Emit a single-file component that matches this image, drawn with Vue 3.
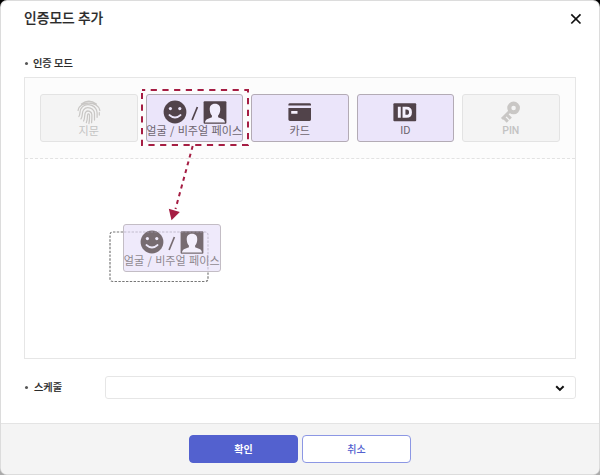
<script setup>
import { h } from 'vue'

const modes = [
  { id: 'finger', label: '지문', disabled: true },
  { id: 'face', label: '얼굴 / 비주얼 페이스' },
  { id: 'card', label: '카드' },
  { id: 'id', label: 'ID' },
  { id: 'pin', label: 'PIN', disabled: true },
]

const FaceIcons = () =>
  h('svg', { width: 66, height: 25, viewBox: '0 0 66 25' }, [
    h('circle', { cx: 12, cy: 12, r: 11.4, fill: 'currentColor' }),
    h('circle', { cx: 7.4, cy: 8.6, r: 1.6, fill: '#ebe5fa' }),
    h('circle', { cx: 16.8, cy: 8.6, r: 1.6, fill: '#ebe5fa' }),
    h('path', { d: 'M6.4 15Q12 20 17.6 15', fill: 'none', stroke: '#ebe5fa', 'stroke-width': 1.7, 'stroke-linecap': 'round' }),
    h('path', { d: 'M29.1 20L34.4 7', fill: 'none', stroke: 'currentColor', 'stroke-width': 1.7 }),
    h('rect', { x: 40.6, y: 1.2, width: 22.8, height: 22.6, rx: 1, fill: 'currentColor' }),
    h('path', { d: 'M41.9 22.4c.3-2 1.6-3 3.2-3.7l3.8-1.5v-1.8c-1.3-1.3-1.9-3-2.1-5.2-.5-4.2 1.5-6.5 5.2-6.5s5.7 2.3 5.2 6.5c-.2 2.2-.9 3.9-2.1 5.2v1.8l3.8 1.5c1.7.7 2.9 1.7 3.1 3.7z', fill: '#f1edfc' }),
  ])
</script>

<template>
  <div class="backdrop">
    <section class="dialog">
      <header class="head">
        <h1>인증모드 추가</h1>
        <svg class="close" width="12" height="12" viewBox="0 0 12 12"><path d="M1.3 1.3l9.2 9.2M10.5 1.3l-9.2 9.2" /></svg>
      </header>
      <div class="content">
        <div class="label"><i></i><span>인증 모드</span></div>
        <div class="board">
          <div class="palette">
            <div v-for="m in modes" :key="m.id" class="mode" :class="[m.id, { disabled: m.disabled }]">
              <div class="icon">
                <FaceIcons v-if="m.id === 'face'" />
                <svg v-else-if="m.id === 'finger'" class="print" width="24" height="25" viewBox="0 0 24 25">
                  <path d="M4.4 4Q11.8-1.5 19.4 4M1.1 10.5C2.2.8 21.4.8 22.8 10.5M1.9 16.5c2.2-3.2-.3-6.5 3.4-9.6C11 1.9 19.7 6 20.1 12.8v4.5M4 18.9c2.2-3 .4-6.5 2.6-9.1 3.5-4.2 10.8-1.4 10.9 4v6.3M6.6 21c1.8-4 .5-6.8 2.1-8.9 2.2-2.4 6.1-.4 6.2 2.7 0 3 0 5.2-.3 7.8M9.3 22.7c1.4-3.2.9-5.8 1.3-7.8.4-1.5 1.9-1.2 1.9.5.1 3 0 5.3-.6 8.1M22.3 12.5v2.5" />
                </svg>
                <svg v-else-if="m.id === 'card'" width="24" height="25" viewBox="0 0 24 25">
                  <path fill="currentColor" d="M2 3.2h19.6q1.4 0 1.4 1.4v1H.4v-1Q.4 3.2 2 3.2zM.4 7.9H23v11.7q0 1.4-1.4 1.4H2Q.4 21 .4 19.6z" />
                  <path fill="#f5f1fd" d="M3.2 11h6.3v2.7H3.2z" />
                </svg>
                <svg v-else-if="m.id === 'id'" width="24" height="25" viewBox="0 0 24 25">
                  <rect x=".4" y="3.2" width="22.8" height="18" rx="1" fill="currentColor" />
                  <path d="M6.3 6.7v11M11 8.1v8.2h2.5c2.8 0 4-1.4 4-4.1s-1.2-4.1-4-4.1z" fill="none" stroke="#f5f1fd" stroke-width="2.9" />
                </svg>
                <svg v-else width="24" height="25" viewBox="0 0 24 25">
                  <circle cx="14.6" cy="7.9" r="4.3" fill="none" stroke="currentColor" stroke-width="4.1" />
                  <path d="M10.8 11.2L3 19M4.4 17.2l4.4 4.4M7.4 14.2l4.4 4.4" fill="none" stroke="currentColor" stroke-width="3" />
                </svg>
              </div>
              <span>{{ m.label }}</span>
            </div>
          </div>
        </div>
        <div class="schedule">
          <div class="label"><i></i><span>스케줄</span></div>
          <div class="select">
            <svg width="10" height="7" viewBox="0 0 10 7"><path d="M1.2 1.2l3.7 3.7 3.7-3.7" /></svg>
          </div>
        </div>
      </div>
      <footer>
        <button class="ok">확인</button>
        <button class="cancel">취소</button>
      </footer>
    </section>

    <div class="mode face ghost">
      <div class="icon"><FaceIcons /></div>
      <span>얼굴 / 비주얼 페이스</span>
    </div>
    <svg class="guide" width="600" height="475" viewBox="0 0 600 475">
      <rect x="142" y="90" width="106" height="55" fill="none" stroke="#a51d43" stroke-width="2" stroke-dasharray="6.2 5.5" stroke-dashoffset="3" />
      <path d="M192.7 146L175.5 209" fill="none" stroke="#a51d43" stroke-width="2" stroke-dasharray="4 4" />
      <path d="M168.8 208.8l11 3.2-8.3 8.3z" fill="#a51d43" />
      <path d="M123 232H113q-3 0-3 3v43.500q0 3 3 3h92q3 0 3-3V272" fill="none" stroke="#777" stroke-width="1.2" stroke-dasharray="2.4 1.4" />
      <path d="M124 232h81q3 0 3 3v36" fill="none" stroke="#aaa3b5" stroke-opacity=".65" stroke-dasharray="2.4 1.4" />
    </svg>
  </div>
</template>

<style>
body { overflow: hidden; }
</style>

<style scoped>
* { box-sizing: border-box; }
.backdrop {
  position: relative;
  width: 600px;
  height: 475px;
  padding: 1px;
  background: linear-gradient(#000 0 8px, #ddd 8px 460px, #aaa 460px);
  font-family: "Noto Sans CJK KR", sans-serif;
  color: #2b2b2b;
}
.dialog {
  display: flex;
  flex-direction: column;
  height: 473px;
  overflow: hidden;
  background: #fff;
  border-radius: 6px;
  box-shadow: 0 0 0 1px #dcdcdc;
}
.head {
  display: flex;
  justify-content: space-between;
  height: 51px;
  padding: 5px 17px 0 23px;
}
h1 { margin: 0; font-size: 13.8px; line-height: 23px; font-weight: 500; -webkit-text-stroke: .15px; }
.close { margin-top: 7px; }
.close path { fill: none; stroke: #111; stroke-width: 1.7; }
.content { flex: 1; padding: 0 23px; }
.label { display: flex; align-items: center; height: 22px; font-size: 10.2px; font-weight: 500; white-space: nowrap; -webkit-text-stroke: .15px; }
.label span { margin-top: -2px; }
.label i { width: 3px; height: 3px; margin: 0 5px 0 1px; border-radius: 50%; background: #555; }
.board { height: 282px; margin-top: 3px; border: 1px solid #e6e6e6; }
.palette {
  display: flex;
  gap: 8px;
  height: 81px;
  padding: 16px 15px;
  background: #fcfcfc;
  border-bottom: 1px dashed #e2e2e2;
}
.mode {
  display: flex;
  flex: none;
  flex-direction: column;
  align-items: center;
  width: 97.5px;
  height: 48px;
  padding-top: 4.5px;
  border: 1px solid #b3abb5;
  border-radius: 3px;
  background: #ebe5fa;
  color: #51434a;
}
.icon { height: 24px; }
.icon svg { display: block; }
.mode.face .icon { padding-left: 3px; }
.mode span { font-size: 11.1px; line-height: 13px; font-weight: 400; word-spacing: .8px; white-space: nowrap; color: #6e6670; }
.mode.disabled { border-color: #e3e3e3; background: #f4f4f4; color: #c9c7c5; }
.mode.disabled span { color: #c3c3c3; }
.mode.id span { font-family: Roboto, sans-serif; font-size: 11px; }
.mode.pin span { font-family: Roboto, sans-serif; font-size: 10.5px; font-weight: 500; }
.print path { fill: none; stroke: currentColor; stroke-width: 1.25; stroke-linecap: round; }
.schedule { display: flex; align-items: center; margin-top: 17px; }
.schedule .label { width: 81px; }
.schedule i { margin-right: 6px; }
.select {
  display: flex;
  flex: 1;
  align-items: center;
  justify-content: flex-end;
  height: 23px;
  padding: 1px 10px 0 0;
  border: 1px solid #e6e6e6;
  border-radius: 3px;
}
.select path { fill: none; stroke: #111; stroke-width: 2; }
footer {
  display: flex;
  justify-content: center;
  gap: 4px;
  height: 51px;
  padding: 11px 0 0 0;
  border-top: 1px solid #e4e4e4;
  background: #f4f4f4;
}
button {
  width: 109px;
  height: 28px;
  padding: 0;
  border: 1px solid #8c97e4;
  border-radius: 4px;
  background: #fff;
  color: #5361cf;
  font: 500 10px/24px "Noto Sans CJK KR", sans-serif;
}
button.ok { border-color: #5361cf; background: #5361cf; color: #fff; font-weight: 700; }
.ghost { position: absolute; left: 123px; top: 224px; opacity: .78; }
.guide { position: absolute; left: 0; top: 0; }
</style>
